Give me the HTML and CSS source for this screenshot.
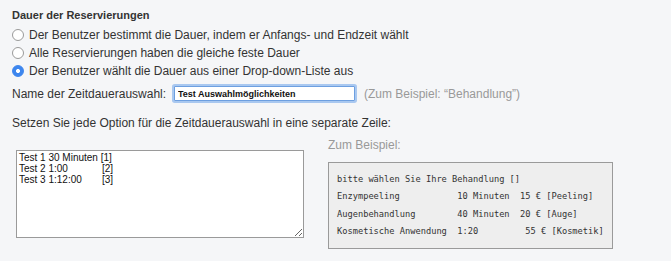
FILE: index.html
```html
<!DOCTYPE html>
<html lang="de">
<head>
    <meta charset="UTF-8">
    <meta name="viewport" content="width=device-width, initial-scale=1.0">
    <title>Dauer der Reservierungen</title>
    <link rel="stylesheet" href="styles.css">
</head>
<body>
    <div class="settings">
        <div class="title">Dauer der Reservierungen</div>

        <div class="options">
            <label class="option"><input type="radio" name="duration" value="range" /> Der Benutzer bestimmt die Dauer, indem er Anfangs- und Endzeit wählt</label>
            <label class="option"><input type="radio" name="duration" value="fixed" /> Alle Reservierungen haben die gleiche feste Dauer</label>
            <label class="option"><input type="radio" name="duration" value="list" checked /> Der Benutzer wählt die Dauer aus einer Drop-down-Liste aus</label>
        </div>

        <div class="name-row">
            <label for="listName">Name der Zeitdauerauswahl:</label>
            <input type="text" id="listName" class="name-input" value="Test Auswahlmöglichkeiten" />
            <span class="hint">(Zum Beispiel: “Behandlung”)</span>
        </div>

        <div class="question">Setzen Sie jede Option für die Zeitdauerauswahl in eine separate Zeile:</div>

        <div class="columns">
            <div class="left">
                <textarea id="durationOptions" class="options-text">Test 1 30 Minuten [1]
Test 2 1:00	[2]
Test 3 1:12:00	[3]</textarea>
            </div>
            <div class="right">
                <div class="hint">Zum Beispiel:</div>
                <pre class="example">bitte wählen Sie Ihre Behandlung []
Enzympeeling           10 Minuten  15 € [Peeling]
Augenbehandlung        40 Minuten  20 € [Auge]
Kosmetische Anwendung  1:20         55 € [Kosmetik]</pre>
            </div>
        </div>
    </div>
</body>
</html>
```

FILE: styles.css
```css
/* General Styling */
body {
    font-family: 'Liberation Sans', Arial, sans-serif;
    font-size: 12px;
    margin: 0;
    padding: 0;
    background-color: #f5f6f8;
    color: #333;
}

.settings {
    padding: 8px 12px;
}

.title {
    font-size: 11px;
    font-weight: bold;
    line-height: 14px;
    color: #333;
}

/* Radio list */
.options {
    display: flex;
    flex-direction: column;
    margin-top: 4px;
}

.option {
    display: flex;
    align-items: center;
    height: 18px;
    line-height: 18px;
}

.option input {
    appearance: none;
    -webkit-appearance: none;
    width: 12px;
    height: 12px;
    margin: 0 5px 0 0;
    border: 1px solid #9a9a9a;
    border-radius: 50%;
    background: #fff;
    flex-shrink: 0;
}

.option input:checked {
    border-color: #3d86ee;
    background: radial-gradient(circle, #fff 0 1.7px, #3d86ee 2.3px);
}

/* Name row */
.name-row {
    display: flex;
    align-items: center;
    height: 19px;
    margin-top: 4px;
}

.name-row label {
    width: 160px;
}

.name-input {
    box-sizing: border-box;
    width: 181px;
    height: 15px;
    margin: 0 2px;
    padding: 0 3px;
    border: 1px solid #6d9fe0;
    border-radius: 1px;
    box-shadow: 0 0 0 2px #a9c8f0;
    font-family: 'Liberation Sans', Arial, sans-serif;
    font-size: 9px;
    font-weight: bold;
    color: #111;
    outline: none;
}

.name-row .hint {
    margin-left: 7px;
}

.hint {
    color: #999;
    line-height: 14px;
}

.question {
    margin-top: 13px;
    line-height: 14px;
}

/* Two columns */
.columns {
    display: flex;
    gap: 24px;
    margin-top: 8px;
}

.left {
    padding-left: 4px;
}

.options-text {
    box-sizing: border-box;
    width: 288px;
    height: 88px;
    margin: 12px 0 0;
    padding: 1px 2px;
    border: 1px solid #9a9a9a;
    border-radius: 0;
    background: #fff;
    font-family: 'Liberation Sans', Arial, sans-serif;
    font-size: 10px;
    line-height: 11px;
    color: #111;
    tab-size: 83px;
    outline: none;
}

.right {
    display: flex;
    flex-direction: column;
}

.example {
    box-sizing: border-box;
    width: 285px;
    margin: 10px 0 0;
    padding: 8px 8px;
    border: 1px solid #9a9a9a;
    background: #eeeeee;
    font-family: 'DejaVu Sans Mono', 'Liberation Mono', monospace;
    font-size: 8.7px;
    line-height: 17.3px;
    color: #333;
}
```
